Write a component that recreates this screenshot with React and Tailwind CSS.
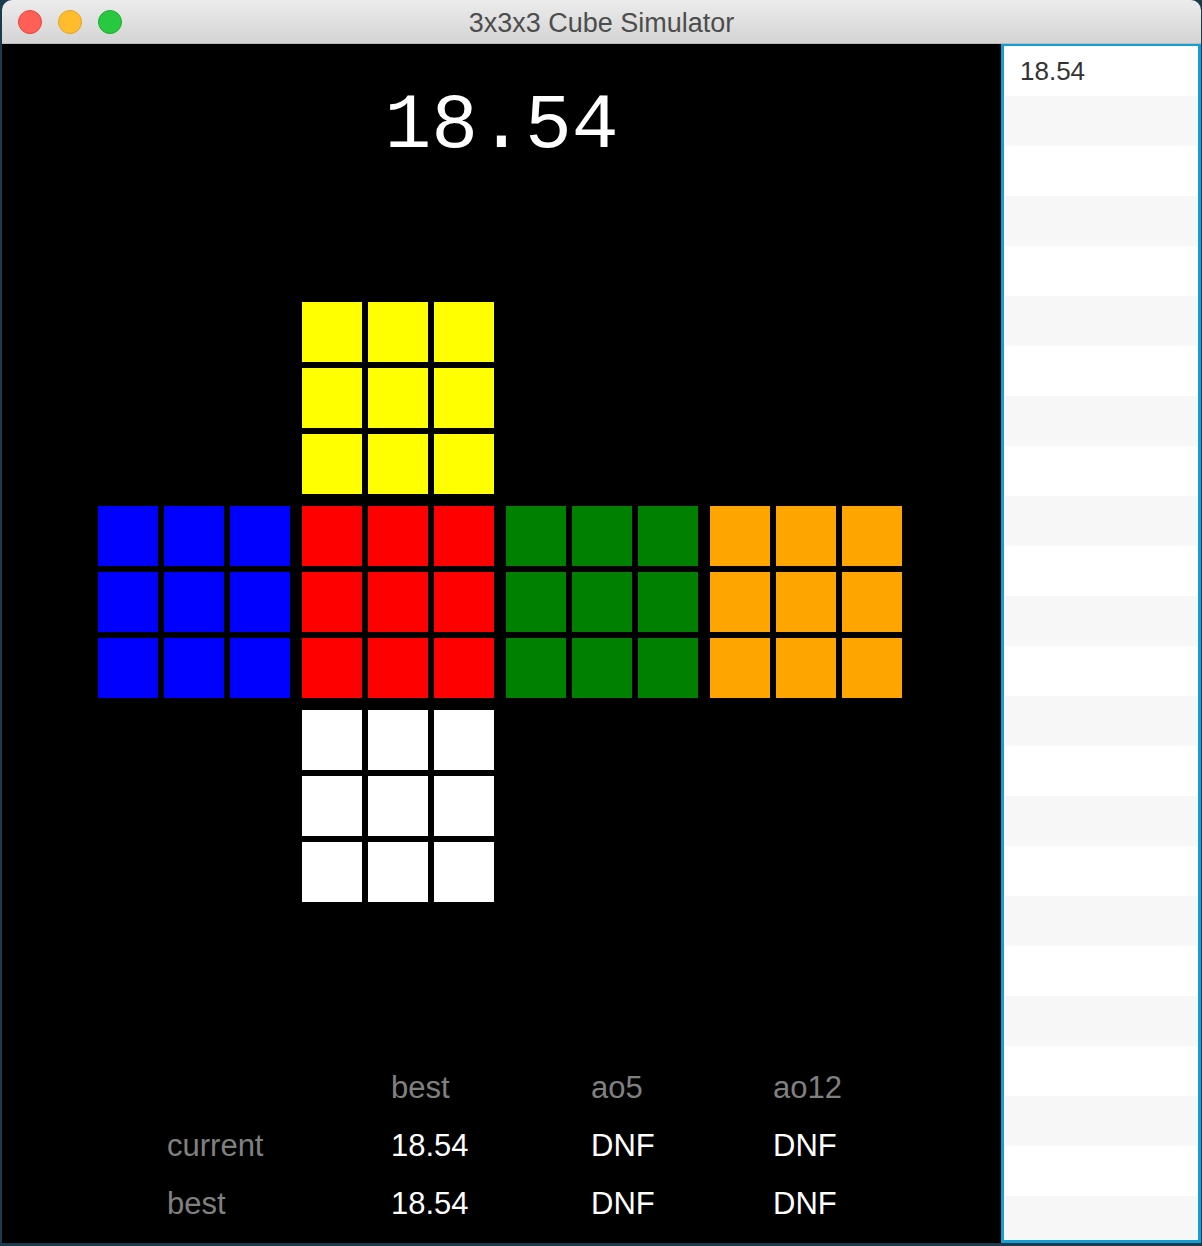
import React from "react";

const faces = [
    [null, "#ffff00", null, null],
    ["#0000ff", "#ff0000", "#008000", "#ffa500"],
    [null, "#ffffff", null, null],
];

const stats = [
    { label: "", values: ["best", "ao5", "ao12"], head: true },
    { label: "current", values: ["18.54", "DNF", "DNF"] },
    { label: "best", values: ["18.54", "DNF", "DNF"] },
];

function Face({ color }) {
    if (!color) {
        return <div className="w-[192px] h-[192px]" />;
    }
    return (
        <div className="grid grid-cols-3 gap-[6px] w-[192px] h-[192px]">
            {Array.from({ length: 9 }).map((_, i) => (
                <div
                    key={i}
                    className="w-[60px] h-[60px]"
                    style={{ backgroundColor: color }}
                />
            ))}
        </div>
    );
}

function App() {
    return (
        <div className="w-[1202px] h-[1246px] bg-[#1c3a4d] overflow-hidden">
            <div className="ml-[2px] w-[1199px] h-[1243px] rounded-t-[10px] overflow-hidden flex flex-col">
                {/* title bar */}
                <div className="relative h-[44px] shrink-0 bg-gradient-to-b from-[#ececec] to-[#d4d4d4] border-b border-[#bcbcbc] flex items-center justify-center">
                    <div className="absolute left-[16px] top-[10px] flex gap-[16px]">
                        <div className="w-[24px] h-[24px] rounded-full bg-[#ff5f57] border border-[#e2463f]" />
                        <div className="w-[24px] h-[24px] rounded-full bg-[#ffbd2e] border border-[#e1a325]" />
                        <div className="w-[24px] h-[24px] rounded-full bg-[#28c940] border border-[#1dac2c]" />
                    </div>
                    <p className="pt-[4px] text-[27px] text-[#4d4d4d] font-['Liberation_Sans',sans-serif] leading-none">
                        3x3x3 Cube Simulator
                    </p>
                </div>

                <div className="flex flex-1 min-h-0">
                    {/* main area */}
                    <div className="w-[999px] bg-black flex flex-col items-center">
                        <p className="mt-[43px] text-[78px] leading-none text-white font-['Liberation_Mono',monospace]">
                            18.54
                        </p>
                        <div className="mt-[137px] ml-[-3px] grid grid-cols-4 gap-[12px]">
                            {faces.flat().map((c, i) => (
                                <Face key={i} color={c} />
                            ))}
                        </div>
                        <div className="mt-[157px] self-start pl-[165px] font-['Liberation_Sans',sans-serif] text-[31px] leading-[58px]">
                            {stats.map((row, i) => (
                                <div key={i} className="flex">
                                    <div className="w-[224px] text-[#808080]">
                                        {row.label}
                                    </div>
                                    {row.values.map((v, j) => (
                                        <div
                                            key={j}
                                            className={
                                                (j === 0 ? "w-[200px] " : j === 1 ? "w-[182px] " : "w-[120px] ") +
                                                (row.head ? "text-[#808080]" : "text-white")
                                            }
                                        >
                                            {v}
                                        </div>
                                    ))}
                                </div>
                            ))}
                        </div>
                    </div>

                    {/* times list */}
                    <div className="w-[200px] border-x-[3px] border-t-2 border-b-[3px] border-[#129fd6] bg-white overflow-hidden">
                        {Array.from({ length: 24 }).map((_, i) => (
                            <div
                                key={i}
                                className={
                                    "h-[50px] pl-[16px] text-[26px] leading-[50px] text-[#333333] font-['Liberation_Sans',sans-serif] " +
                                    (i % 2 === 0 ? "bg-white" : "bg-[#f7f7f7]")
                                }
                            >
                                {i === 0 ? "18.54" : ""}
                            </div>
                        ))}
                    </div>
                </div>
            </div>
        </div>
    );
}

export default App;
